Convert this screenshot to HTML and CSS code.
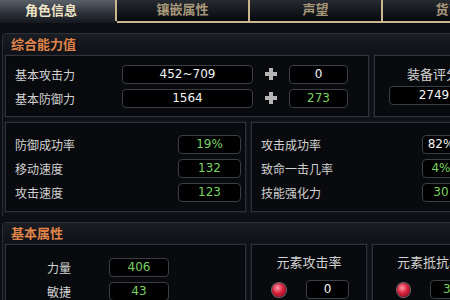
FILE: index.html
```html
<!DOCTYPE html>
<html lang="zh-CN">
<head>
    <meta charset="UTF-8">
    <title>角色信息</title>
    <link rel="stylesheet" href="styles.css">
</head>
<body>
    <div class="tabs">
        <div class="tab active">角色信息</div>
        <div class="tab">镶嵌属性</div>
        <div class="tab">声望</div>
        <div class="tab">货币</div>
    </div>

    <div class="section">
        <div class="section-title">综合能力值</div>
        <div class="row row-top">
            <div class="panel panel-base">
                <div class="line">
                    <span class="label">基本攻击力</span>
                    <span class="box box-wide">452~709</span>
                    <span class="plus"></span>
                    <span class="box box-small">0</span>
                </div>
                <div class="line">
                    <span class="label">基本防御力</span>
                    <span class="box box-wide">1564</span>
                    <span class="plus"></span>
                    <span class="box box-small green">273</span>
                </div>
            </div>
            <div class="panel panel-score">
                <div class="score-label">装备评分</div>
                <span class="box box-score">2749</span>
            </div>
        </div>
        <div class="row row-mid">
            <div class="panel panel-rates">
                <div class="line"><span class="label">防御成功率</span><span class="box box-rate green">19%</span></div>
                <div class="line"><span class="label">移动速度</span><span class="box box-rate green">132</span></div>
                <div class="line"><span class="label">攻击速度</span><span class="box box-rate green">123</span></div>
            </div>
            <div class="panel panel-rates panel-right">
                <div class="line"><span class="label">攻击成功率</span><span class="box box-rate">82%</span></div>
                <div class="line"><span class="label">致命一击几率</span><span class="box box-rate green">4%</span></div>
                <div class="line"><span class="label">技能强化力</span><span class="box box-rate green">30</span></div>
            </div>
        </div>
    </div>

    <div class="section section-2">
        <div class="section-title">基本属性</div>
        <div class="row row-bottom">
            <div class="panel panel-stats">
                <div class="line"><span class="label stat">力量</span><span class="box box-stat green">406</span></div>
                <div class="line"><span class="label stat">敏捷</span><span class="box box-stat green">43</span></div>
            </div>
            <div class="panel panel-element">
                <div class="element-title">元素攻击率</div>
                <div class="element-line"><span class="ball"></span><span class="box box-element">0</span></div>
            </div>
            <div class="panel panel-element panel-resist">
                <div class="element-title">元素抵抗率</div>
                <div class="element-line"><span class="ball"></span><span class="box box-element green">30</span></div>
            </div>
        </div>
    </div>
</body>
</html>
```

FILE: styles.css
```css
body {
    margin: 0;
    width: 450px;
    height: 300px;
    overflow: hidden;
    background-color: #0c0e13;
    font-family: "Noto Sans CJK SC", "DejaVu Sans", sans-serif;
    font-size: 12px;
    color: #d2d2d2;
}

/* tabs */
.tabs {
    display: flex;
    height: 21px;
    border-bottom: 2px solid #c9b68e;
    margin-bottom: 10px;
}
.tab {
    flex: 0 0 auto;
    width: 135px;
    height: 21px;
    box-sizing: border-box;
    border: 2px solid #c9b68e;
    border-top: none;
    border-bottom: none;
    margin-left: -2px;
    background: linear-gradient(#262a31, #06080c);
    color: #a8987a;
    font-weight: bold;
    font-size: 13px;
    line-height: 17px;
    text-align: center;
}
.tab.active {
    width: 117px;
    margin-left: 0;
    padding-right: 15px;
    border: none;
    margin-bottom: -2px;
    height: 23px;
    line-height: 19px;
    background: linear-gradient(#5a6069, #2a2f37 60%, #15181e);
    color: #efe4c6;
}

/* sections */
.section {
    margin-left: 2px;
    border-left: 1px solid #2c3038;
    border-top: 1px solid #2c3038;
    border-top-left-radius: 4px;
    background-color: #0e1015;
}
.section-2 {
    margin-top: 6px;
}
.section-title {
    height: 21px;
    padding-left: 8px;
    line-height: 20px;
    font-size: 13px;
    font-weight: bold;
    color: #e0844a;
    background: linear-gradient(#1a1d24, #0e1015);
}

.row {
    display: flex;
    gap: 5px;
    padding-left: 2px;
}
.row-mid {
    margin-top: 5px;
    padding-bottom: 4px;
}

.panel {
    flex: 0 0 auto;
    box-sizing: border-box;
    border: 1px solid #2e323a;
    box-shadow: inset 0 0 0 1px #07080b, 0 0 0 1px #17191f;
    background-color: #090a0d;
}

.line {
    display: flex;
    align-items: center;
    height: 24px;
}
.label {
    width: 116px;
    padding-left: 9px;
    flex: 0 0 auto;
    box-sizing: border-box;
}

.box {
    box-sizing: border-box;
    height: 19px;
    border: 1px solid #3a3e45;
    border-radius: 4px;
    background-color: #000;
    color: #f4f4f4;
    font-family: "DejaVu Sans", sans-serif;
    font-size: 12px;
    line-height: 17px;
    text-align: center;
}
.green {
    color: #78d160;
}

/* top row */
.row-top .panel {
    height: 62px;
    padding-top: 6px;
}
.panel-base {
    width: 364px;
}
.box-wide {
    width: 131px;
}
.plus {
    position: relative;
    width: 12px;
    height: 12px;
    margin: 0 12px;
}
.plus::before,
.plus::after {
    content: "";
    position: absolute;
    background-color: #b4b4b4;
}
.plus::before {
    left: 0;
    top: 4px;
    width: 12px;
    height: 4px;
}
.plus::after {
    left: 4px;
    top: 0;
    width: 4px;
    height: 12px;
}
.box-small {
    width: 59px;
}
.panel-score {
    width: 100px;
}
.score-label {
    height: 24px;
    line-height: 24px;
    padding-left: 32px;
    font-size: 13px;
}
.box-score {
    display: block;
    width: 90px;
    margin-left: 14px;
}

/* middle row */
.panel-rates {
    width: 241px;
    height: 90px;
    padding-top: 9px;
}
.panel-rates .label {
    width: 172px;
}
.panel-right {
    width: 210px;
}
.panel-right .label {
    width: 170px;
}
.box-rate {
    width: 63px;
}

/* bottom row */
.row-bottom .panel {
    height: 70px;
}
.panel-stats {
    width: 241px;
    padding-top: 10px;
}
.label.stat {
    width: 103px;
    padding-left: 41px;
}
.box-stat {
    width: 60px;
}
.panel-element {
    width: 116px;
    padding-top: 5px;
    text-align: center;
}
.panel-resist {
    width: 100px;
    text-align: left;
    padding-left: 24px;
}
.element-title {
    height: 24px;
    line-height: 24px;
    font-size: 13px;
}
.element-line {
    display: flex;
    align-items: center;
    gap: 20px;
    padding-left: 20px;
    margin-top: 6px;
}
.panel-resist .element-line {
    padding-left: 0;
}
.ball {
    width: 14px;
    height: 14px;
    border-radius: 50%;
    background: radial-gradient(circle at 40% 35%, #ff9aa8, #d8203c 45%, #7a0a1a);
    box-shadow: 0 0 0 1px #6a6a70;
}
.box-element {
    width: 43px;
}
```
